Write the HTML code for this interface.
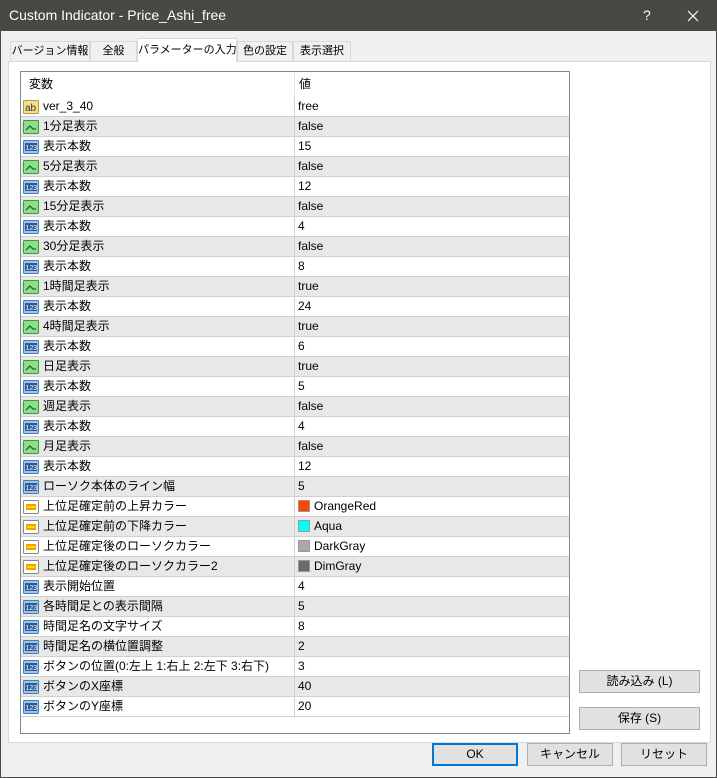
<!DOCTYPE html>
<html><head><meta charset="utf-8"><style>
*{margin:0;padding:0;box-sizing:border-box}
body{width:717px;height:778px;background:#f0f0f0;font-family:"Liberation Sans","Noto Sans CJK JP",sans-serif;font-size:12px;color:#000;position:relative;overflow:hidden;white-space:nowrap}
.title{position:absolute;left:0;top:0;width:717px;height:31px;background:#4a4845;color:#fff;font-size:14px;line-height:31px;padding-left:9px}
.tq{position:absolute;left:643px;top:0;font-size:14px}
.tx{position:absolute;left:683px;top:6px}
.tab{position:absolute;top:41px;height:21px;border:1px solid #d9d9d9;border-bottom:none;background:#f0f0f0;line-height:19px;text-align:center;font-size:11px;overflow:hidden}
.tab.sel{top:38px;height:24px;background:#fff;line-height:22px;z-index:2}
.panel{position:absolute;left:8px;top:61px;width:703px;height:682px;background:#fff;border:1px solid #d9d9d9}
.list{position:absolute;left:20px;top:71px;width:550px;height:663px;border:1px solid #828790;background:#fff;overflow:hidden}
.hdr{position:absolute;left:0;top:0;width:548px;height:25px;line-height:25px}
.hdr span{position:absolute}
.vsep{position:absolute;left:273px;top:0;width:1px;height:645px;background:#e5e5e5}
.row{position:absolute;left:0;width:548px;height:20px;border-bottom:1px solid #d0d0d0;line-height:19px}
.row.g{background:#e8e8e8}
.row .n{position:absolute;left:22px}
.row .v{position:absolute;left:277px}
.row svg{position:absolute;left:2px;top:2px}
.sw{display:inline-block;width:12px;height:12px;border:1px solid #999;vertical-align:-2px;margin-right:4px}
.btn{position:absolute;height:23px;background:#e1e1e1;border:1px solid #adadad;text-align:center;line-height:21px;font-size:12px}
</style></head><body>
<div class="title">Custom Indicator - Price_Ashi_free<span class="tq">?</span>
<svg class="tx" width="20" height="20" viewBox="0 0 20 20"><path d="M5 5L15 15M15 5L5 15" stroke="#fff" stroke-width="1.2"/></svg></div>
<div class="tab" style="left:10px;width:80px">バージョン情報</div>
<div class="tab" style="left:90px;width:47px">全般</div>
<div class="tab sel" style="left:137px;width:100px">パラメーターの入力</div>
<div class="tab" style="left:237px;width:56px">色の設定</div>
<div class="tab" style="left:293px;width:58px">表示選択</div>
<div class="panel"></div>
<div class="list">
<div class="hdr"><span style="left:8px">変数</span><span style="left:278px">値</span></div>
<div style="position:absolute;left:273px;top:0;width:1px;height:25px;background:#e5e5e5"></div>
<div class="vsep" style="top:25px;height:620px"></div>
<div id="rows"></div>
</div>
<div class="btn" style="left:579px;top:670px;width:121px">読み込み (L)</div>
<div class="btn" style="left:579px;top:707px;width:121px">保存 (S)</div>
<div class="btn" style="left:432px;top:743px;width:86px;border:2px solid #0078d7;line-height:19px">OK</div>
<div class="btn" style="left:527px;top:743px;width:86px">キャンセル</div>
<div class="btn" style="left:621px;top:743px;width:86px">リセット</div>
<div style="position:absolute;left:0;top:777px;width:717px;height:1px;background:#4a4845"></div>
<div style="position:absolute;left:0;top:31px;width:1px;height:747px;background:#4a4845"></div>
<div style="position:absolute;left:716px;top:31px;width:1px;height:747px;background:#4a4845"></div>
<script>
var ab='<svg width="16" height="16"><rect x="0.5" y="1.5" width="15" height="13" rx="1" fill="#f3e08a" stroke="#b39a3a"/><text x="2" y="12" font-size="10" font-family="Liberation Sans" fill="#333">ab</text></svg>';
var bo='<svg width="16" height="16"><rect x="0.5" y="1.5" width="15" height="13" rx="1" fill="#8fdc8f" stroke="#3a9a3a"/><path d="M3 11L7 7L10 10L13 10" stroke="#1a6a1a" fill="none" stroke-width="1.3"/></svg>';
var nu='<svg width="16" height="16"><rect x="0.5" y="1.5" width="15" height="13" rx="1" fill="#9cc4ec" stroke="#4a7ab0"/><rect x="2" y="4" width="12" height="8" fill="#2a5a9a"/><text x="2.5" y="11" font-size="7" font-family="Liberation Sans" fill="#fff">123</text></svg>';
var co='<svg width="16" height="16"><rect x="0.5" y="1.5" width="15" height="13" rx="1" fill="#fff" stroke="#888"/><rect x="3" y="5" width="10" height="6" fill="#f5a000"/><rect x="4" y="7" width="8" height="2" fill="#ffe000"/></svg>';
var d=[[ab,'ver_3_40','free'],[bo,'1分足表示','false'],[nu,'表示本数','15'],[bo,'5分足表示','false'],[nu,'表示本数','12'],[bo,'15分足表示','false'],[nu,'表示本数','4'],[bo,'30分足表示','false'],[nu,'表示本数','8'],[bo,'1時間足表示','true'],[nu,'表示本数','24'],[bo,'4時間足表示','true'],[nu,'表示本数','6'],[bo,'日足表示','true'],[nu,'表示本数','5'],[bo,'週足表示','false'],[nu,'表示本数','4'],[bo,'月足表示','false'],[nu,'表示本数','12'],[nu,'ローソク本体のライン幅','5'],[co,'上位足確定前の上昇カラー','<span class="sw" style="background:#ff4500"></span>OrangeRed'],[co,'上位足確定前の下降カラー','<span class="sw" style="background:#00ffff"></span>Aqua'],[co,'上位足確定後のローソクカラー','<span class="sw" style="background:#a9a9a9"></span>DarkGray'],[co,'上位足確定後のローソクカラー2','<span class="sw" style="background:#696969"></span>DimGray'],[nu,'表示開始位置','4'],[nu,'各時間足との表示間隔','5'],[nu,'時間足名の文字サイズ','8'],[nu,'時間足名の横位置調整','2'],[nu,'ボタンの位置(0:左上 1:右上 2:左下 3:右下)','3'],[nu,'ボタンのX座標','40'],[nu,'ボタンのY座標','20']];
var h='';for(var i=0;i<d.length;i++){h+='<div class="row'+(i%2?' g':'')+'" style="top:'+(25+i*20)+'px">'+d[i][0]+'<span class="n">'+d[i][1]+'</span><span class="v">'+d[i][2]+'</span><div style="position:absolute;left:273px;top:0;width:1px;height:20px;background:#d0d0d0"></div></div>';}
document.getElementById('rows').innerHTML=h;
</script>
</body></html>
